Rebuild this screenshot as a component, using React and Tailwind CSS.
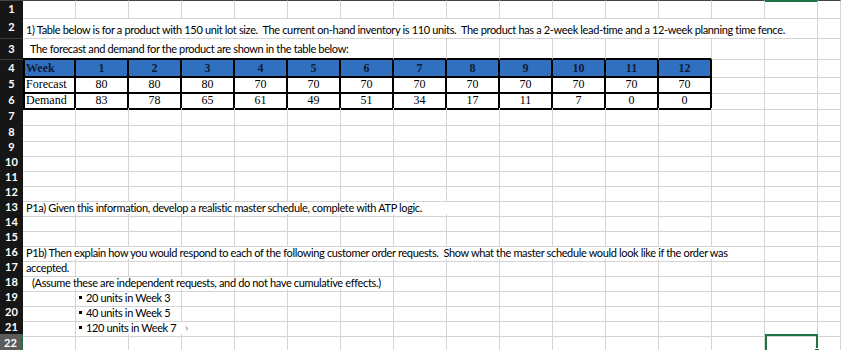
import React from "react";

const sans = "font-['Lato','Noto_Sans',sans-serif]";
const serif = "font-['Liberation_Serif','Times_New_Roman',serif]";

const gridCls = "grid grid-cols-[23px_repeat(15,53px)_1fr]";
const cellCls = "border-r border-b border-[#d4d4d4]";

const weeks = [1, 2, 3, 4, 5, 6, 7, 8, 9, 10, 11, 12];
const forecast = [80, 80, 80, 70, 70, 70, 70, 70, 70, 70, 70, 70];
const demand = [83, 78, 65, 61, 49, 51, 34, 17, 11, 7, 0, 0];

const spanCls = {
  1: "col-span-1",
  2: "col-span-2",
  3: "col-span-3",
  7: "col-span-7",
  9: "col-span-9",
  14: "col-span-14",
  15: "col-span-15",
};

const RowHead = ({ n, active }) => (
  <div
    className={
      active
        ? "bg-[#5c5c5c] border-r-2 border-[#217346] text-white font-bold text-[11px] flex items-center justify-center " + sans
        : "bg-[#161616] border-b border-[#3a3a3a] text-white font-bold text-[11px] flex items-center justify-center " + sans
    }
  >
    {n}
  </div>
);

// segs: [{ start, span, content, cls }]
const SheetRow = ({ n, h, segs = [], blackBottom = [], active, top }) => {
  const out = [];
  let col = 0;
  while (col < 16) {
    const seg = segs.find((s) => s.start === col);
    if (seg) {
      out.push(
        <div
          key={col}
          className={
            spanCls[seg.span] +
            " whitespace-pre flex items-end text-[11px] tracking-[-0.35px] text-black leading-none pb-[3px] " +
            sans +
            " " +
            (seg.black ? "border-r border-[#d4d4d4] border-b-2 border-b-black " : cellCls + " ") +
            (seg.cls || "")
          }
        >
          {seg.content}
        </div>
      );
      col += seg.span;
    } else {
      let cls = cellCls;
      if (blackBottom.includes(col)) cls = "border-r border-[#d4d4d4] border-b-2 border-b-black";
      if (top) cls += col === 14 ? " border-t-2 border-t-[#217346]" : " border-t border-t-[#444]";
      if (active && col === 14) {
        out.push(
          <div key={col} className="relative border-2 border-[#217346]">
            <div className="absolute right-[-4px] bottom-[-4px] w-[6px] h-[6px] bg-[#217346] border border-white" />
          </div>
        );
      } else {
        out.push(<div key={col} className={cls} />);
      }
      col += 1;
    }
  }
  return (
    <div className={gridCls + " " + h}>
      {top ? (
        <div className={"bg-[#161616] border-t border-[#444] border-b border-b-[#3a3a3a] text-white font-bold text-[11px] flex items-center justify-center " + sans}>
          {n}
        </div>
      ) : (
        <RowHead n={n} active={active} />
      )}
      {out}
    </div>
  );
};

const dots =
  "bg-[#3f90ec] bg-[image:radial-gradient(circle,#102a5c_0.5px,transparent_0.8px)] bg-[length:2px_2px]";

const TableRow = ({ n, label, values, head }) => (
  <div className={gridCls + " h-[16px]"}>
    <RowHead n={n} />
    <div
      className={
        "border-l-2 border-r-2 border-b-2 border-black flex items-center pl-[1px] text-[12px] leading-none " +
        serif +
        (head ? " font-bold text-[#101c33] " + dots : " text-black")
      }
    >
      {label}
    </div>
    {values.map((v, i) => (
      <div
        key={i}
        className={
          "border-r-2 border-b-2 border-black flex items-center justify-center text-[12px] leading-none " +
          serif +
          (head ? " font-bold text-[#101c33] " + dots : " text-black")
        }
      >
        {v}
      </div>
    ))}
    <div className={cellCls} />
    <div className={cellCls} />
    <div className={cellCls} />
  </div>
);

const Bullet = ({ children, chevron }) => (
  <span className="flex items-center">
    <span className="inline-block w-[3px] h-[3px] bg-black ml-[3px] mr-[4px]" />
    {children}
    {chevron && <span className="ml-[9px] text-[#555] text-[10px]">›</span>}
  </span>
);

export default function App() {
  return (
    <div className="w-[841px] h-[350px] overflow-hidden bg-white">
      <SheetRow n={1} h="h-[16px]" top />
      <SheetRow
        n={2}
        h="h-[23px]"
        segs={[
          {
            start: 0,
            span: 15,
            cls: "pl-[3px]",
            content:
              "1) Table below is for a product with 150 unit lot size.  The current on-hand inventory is 110 units.  The product has a 2-week lead-time and a 12-week planning time fence.",
          },
        ]}
      />
      <SheetRow
        n={3}
        h="h-[21px]"
        blackBottom={[7, 8, 9, 10, 11, 12]}
        segs={[
          {
            start: 0,
            span: 7,
            black: true,
            cls: "pl-[7px] pb-[4px]",
            content: "The forecast and demand for the product are shown in the table below:",
          },
        ]}
      />
      <TableRow n={4} label="Week" values={weeks} head />
      <TableRow n={5} label="Forecast" values={forecast} />
      <TableRow n={6} label="Demand" values={demand} />
      {[7, 8, 9, 10, 11, 12].map((n) => (
        <SheetRow key={n} n={n} h={n === 7 ? "h-[16px]" : "h-[15px]"} />
      ))}
      <SheetRow
        n={13}
        h="h-[15px]"
        segs={[
          {
            start: 0,
            span: 9,
            cls: "pl-[3px]",
            content: "P1a) Given this information, develop a realistic master schedule, complete with ATP logic.",
          },
        ]}
      />
      <SheetRow n={14} h="h-[15px]" />
      <SheetRow n={15} h="h-[15px]" />
      <SheetRow
        n={16}
        h="h-[15px]"
        segs={[
          {
            start: 0,
            span: 14,
            cls: "pl-[3px]",
            content:
              "P1b) Then explain how you would respond to each of the following customer order requests.  Show what the master schedule would look like if the order was",
          },
        ]}
      />
      <SheetRow n={17} h="h-[15px]" segs={[{ start: 0, span: 1, cls: "pl-[3px]", content: "accepted." }]} />
      <SheetRow
        n={18}
        h="h-[15px]"
        segs={[
          {
            start: 0,
            span: 7,
            cls: "pl-[9px]",
            content: "(Assume these are independent requests, and do not have cumulative effects.)",
          },
        ]}
      />
      <SheetRow n={19} h="h-[15px]" segs={[{ start: 1, span: 2, content: <Bullet>20 units in Week 3</Bullet> }]} />
      <SheetRow n={20} h="h-[15px]" segs={[{ start: 1, span: 2, content: <Bullet>40 units in Week 5</Bullet> }]} />
      <SheetRow
        n={21}
        h="h-[15px]"
        segs={[{ start: 1, span: 3, content: <Bullet chevron>120 units in Week 7</Bullet> }]}
      />
      <SheetRow n={22} h="h-[18px]" active />
    </div>
  );
}
